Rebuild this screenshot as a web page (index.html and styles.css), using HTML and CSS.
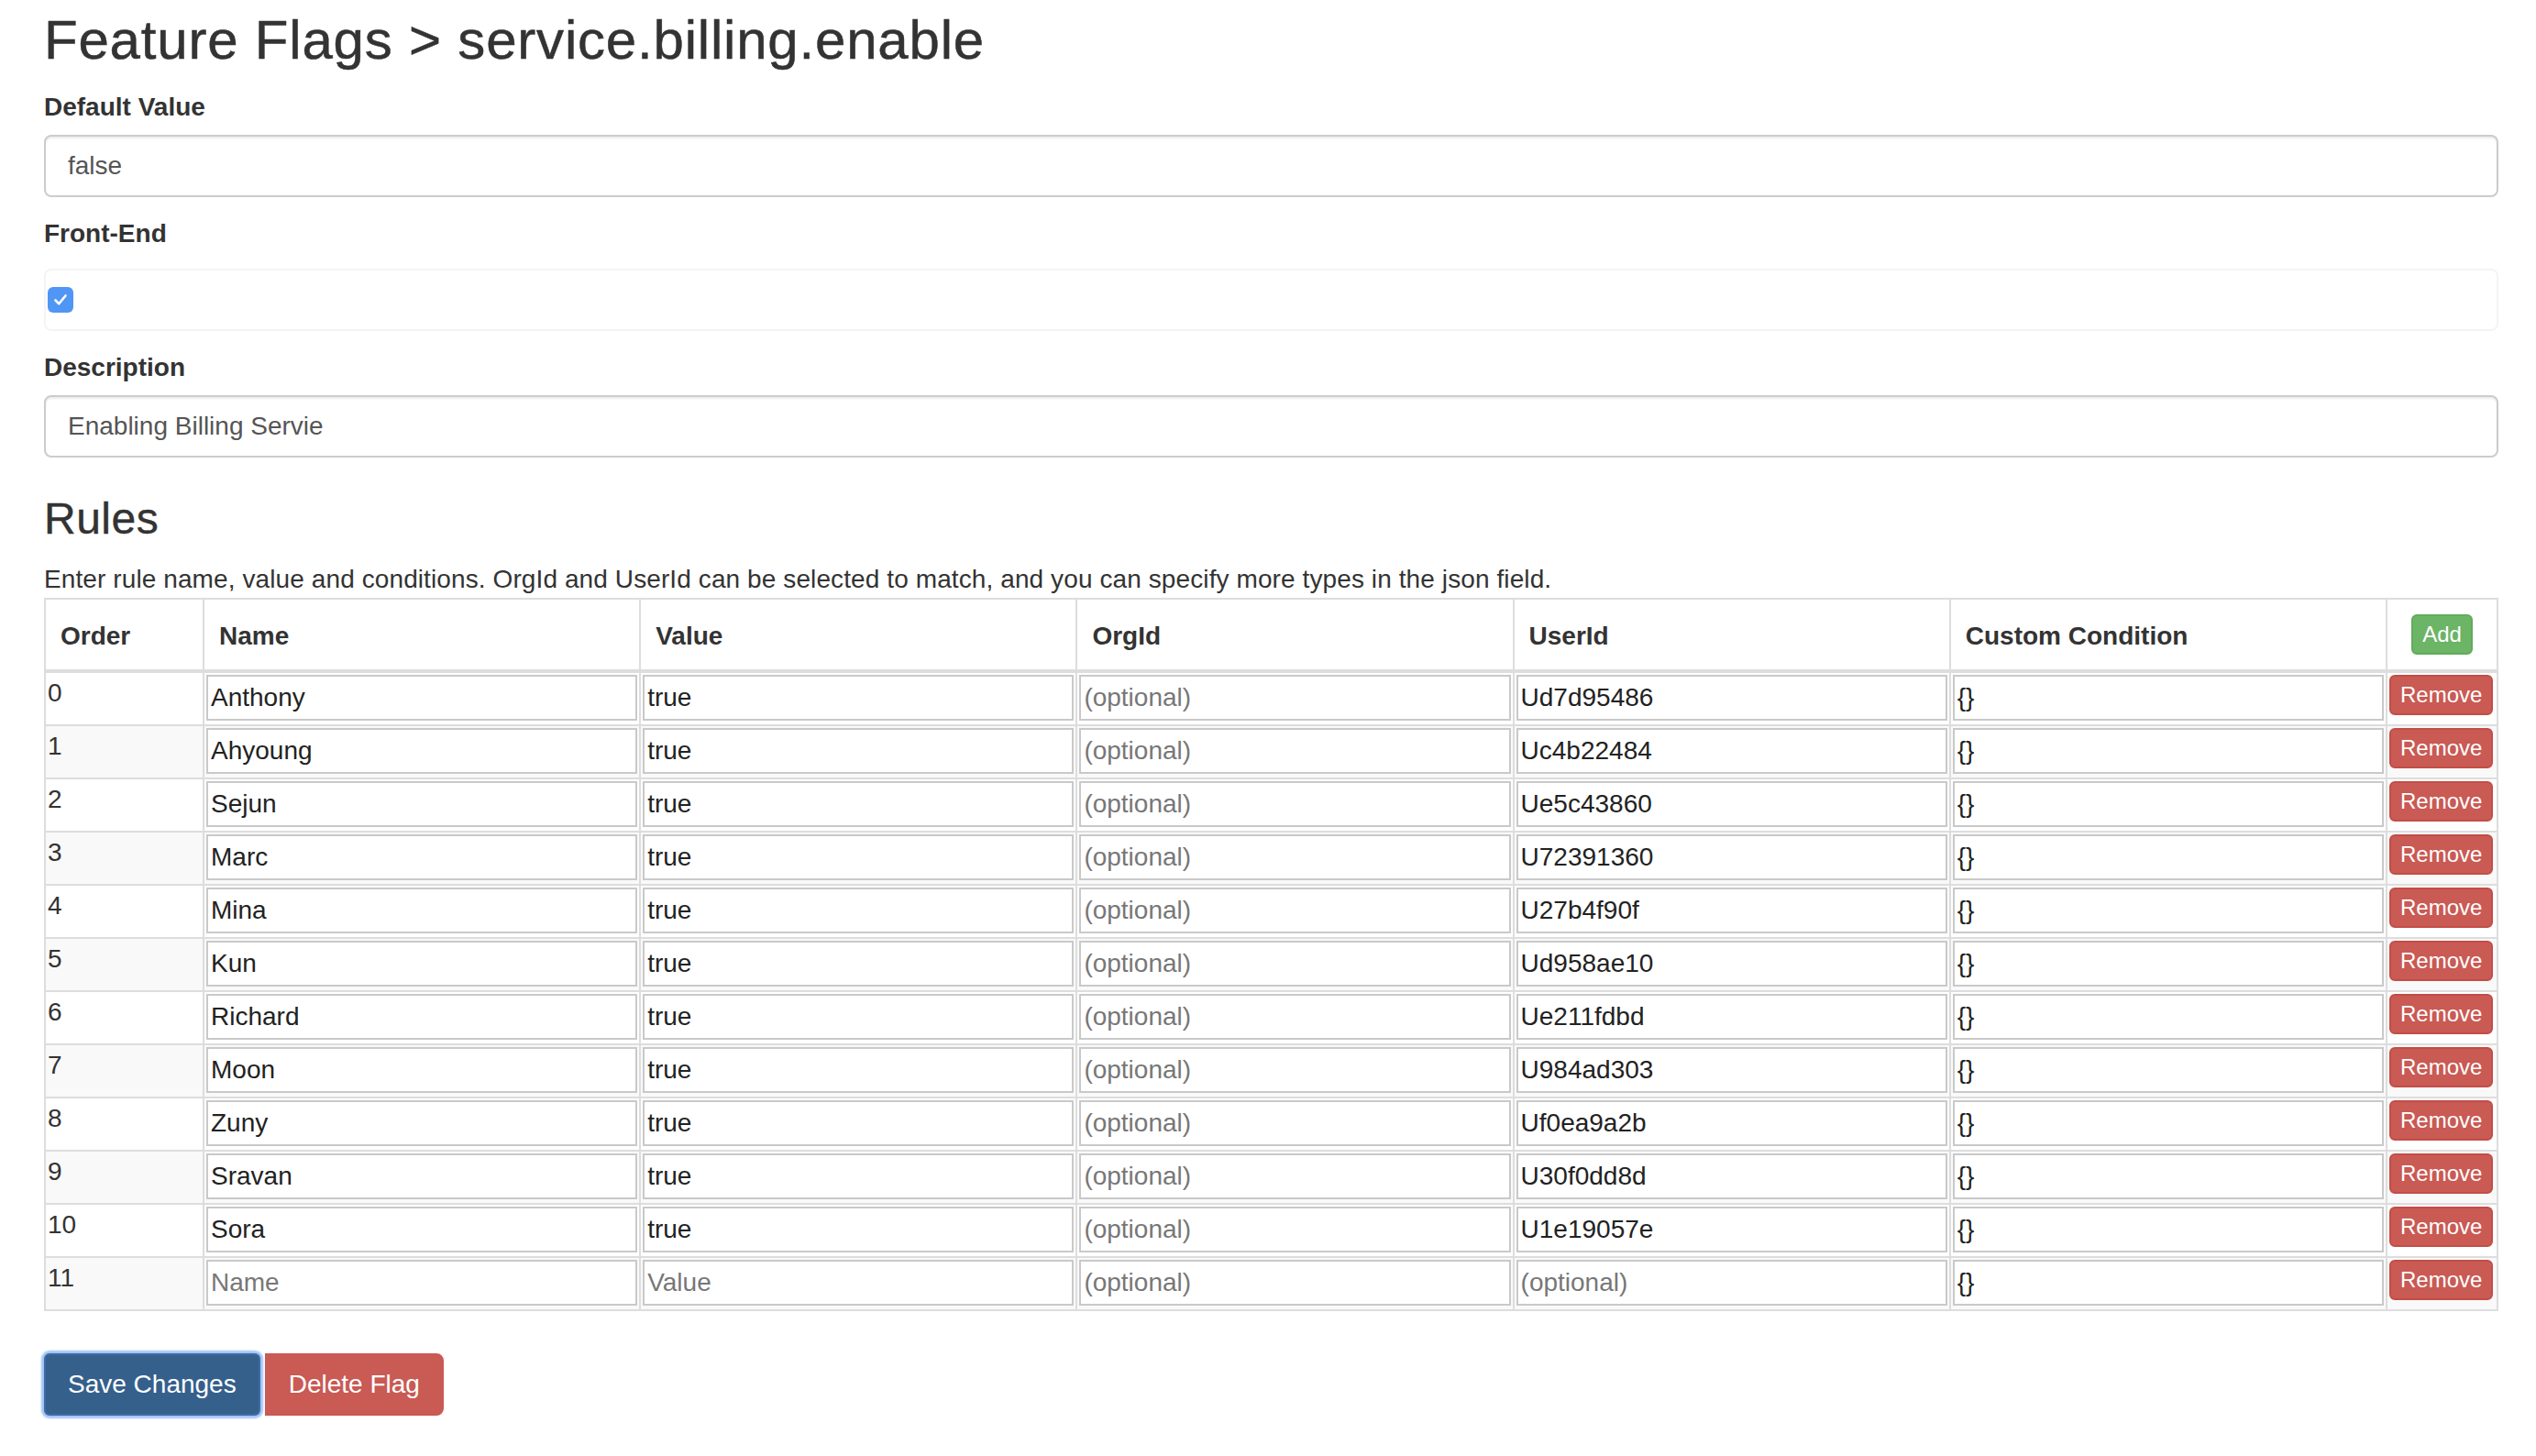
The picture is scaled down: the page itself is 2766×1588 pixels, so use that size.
FILE: index.html
```html
<!DOCTYPE html>
<html>
<head>
<meta charset="utf-8">
<title>Feature Flags</title>
<link rel="stylesheet" href="styles.css">
</head>
<body>
<div class="page">
  <h2 class="title">Feature Flags &gt; service.billing.enable</h2>

  <div class="form-group">
    <label>Default Value</label>
    <input class="form-control" type="text" value="false">
  </div>

  <div class="form-group">
    <label>Front-End</label>
    <div class="check-wrap">
      <span class="checkbox">
        <svg width="20" height="20" viewBox="0 0 20 20"><path d="M4.5 10.5 L8.3 14.3 L15.5 5.5" fill="none" stroke="#fff" stroke-width="2.6" stroke-linecap="round" stroke-linejoin="round"/></svg>
      </span>
    </div>
  </div>

  <div class="form-group">
    <label>Description</label>
    <input class="form-control" type="text" value="Enabling Billing Servie">
  </div>

  <h3 class="rules">Rules</h3>
  <div class="help">Enter rule name, value and conditions. OrgId and UserId can be selected to match, and you can specify more types in the json field.</div>

  <table class="rules-table">
    <colgroup>
      <col class="c-order">
      <col>
      <col>
      <col>
      <col>
      <col>
      <col class="c-action">
    </colgroup>
    <thead>
      <tr>
        <th>Order</th>
        <th>Name</th>
        <th>Value</th>
        <th>OrgId</th>
        <th>UserId</th>
        <th>Custom Condition</th>
        <th class="th-action"><button class="btn-xs btn-success">Add</button></th>
      </tr>
    </thead>
    <tbody>
      <tr><td>0</td><td><input value="Anthony"></td><td><input value="true"></td><td><input placeholder="(optional)"></td><td><input value="Ud7d95486"></td><td><input value="{}"></td><td><button class="btn-xs btn-danger">Remove</button></td></tr>
      <tr><td>1</td><td><input value="Ahyoung"></td><td><input value="true"></td><td><input placeholder="(optional)"></td><td><input value="Uc4b22484"></td><td><input value="{}"></td><td><button class="btn-xs btn-danger">Remove</button></td></tr>
      <tr><td>2</td><td><input value="Sejun"></td><td><input value="true"></td><td><input placeholder="(optional)"></td><td><input value="Ue5c43860"></td><td><input value="{}"></td><td><button class="btn-xs btn-danger">Remove</button></td></tr>
      <tr><td>3</td><td><input value="Marc"></td><td><input value="true"></td><td><input placeholder="(optional)"></td><td><input value="U72391360"></td><td><input value="{}"></td><td><button class="btn-xs btn-danger">Remove</button></td></tr>
      <tr><td>4</td><td><input value="Mina"></td><td><input value="true"></td><td><input placeholder="(optional)"></td><td><input value="U27b4f90f"></td><td><input value="{}"></td><td><button class="btn-xs btn-danger">Remove</button></td></tr>
      <tr><td>5</td><td><input value="Kun"></td><td><input value="true"></td><td><input placeholder="(optional)"></td><td><input value="Ud958ae10"></td><td><input value="{}"></td><td><button class="btn-xs btn-danger">Remove</button></td></tr>
      <tr><td>6</td><td><input value="Richard"></td><td><input value="true"></td><td><input placeholder="(optional)"></td><td><input value="Ue211fdbd"></td><td><input value="{}"></td><td><button class="btn-xs btn-danger">Remove</button></td></tr>
      <tr><td>7</td><td><input value="Moon"></td><td><input value="true"></td><td><input placeholder="(optional)"></td><td><input value="U984ad303"></td><td><input value="{}"></td><td><button class="btn-xs btn-danger">Remove</button></td></tr>
      <tr><td>8</td><td><input value="Zuny"></td><td><input value="true"></td><td><input placeholder="(optional)"></td><td><input value="Uf0ea9a2b"></td><td><input value="{}"></td><td><button class="btn-xs btn-danger">Remove</button></td></tr>
      <tr><td>9</td><td><input value="Sravan"></td><td><input value="true"></td><td><input placeholder="(optional)"></td><td><input value="U30f0dd8d"></td><td><input value="{}"></td><td><button class="btn-xs btn-danger">Remove</button></td></tr>
      <tr><td>10</td><td><input value="Sora"></td><td><input value="true"></td><td><input placeholder="(optional)"></td><td><input value="U1e19057e"></td><td><input value="{}"></td><td><button class="btn-xs btn-danger">Remove</button></td></tr>
      <tr><td>11</td><td><input placeholder="Name"></td><td><input placeholder="Value"></td><td><input placeholder="(optional)"></td><td><input placeholder="(optional)"></td><td><input value="{}"></td><td><button class="btn-xs btn-danger">Remove</button></td></tr>
    </tbody>
  </table>

  <div class="actions">
    <button class="btn btn-primary">Save Changes</button>
    <button class="btn btn-delete">Delete Flag</button>
  </div>
</div>
</body>
</html>
```
FILE: styles.css
```css
html, body {
  margin: 0;
  padding: 0;
  background: #fff;
}

body {
  font-family: "Liberation Sans", Arial, sans-serif;
  font-size: 28px;
  line-height: 40px;
  color: #333;
}

.page {
  padding: 11px 41px 40px 48px;
}

.title {
  font-size: 60px;
  font-weight: 400;
  line-height: 66px;
  margin: 0 0 20px 0;
  color: #333;
  letter-spacing: 0.8px;
  -webkit-text-stroke: 0.5px #333;
}

.form-group {
  margin-bottom: 20px;
}

.form-group label {
  display: block;
  font-weight: 700;
  margin-bottom: 10px;
}

.form-control {
  display: block;
  width: 100%;
  height: 68px;
  box-sizing: border-box;
  padding: 12px 24px;
  font: inherit;
  color: #555;
  background: #fff;
  border: 2px solid #ccc;
  border-radius: 8px;
  box-shadow: inset 0 2px 2px rgba(0, 0, 0, 0.075);
  outline: none;
}

.check-wrap {
  margin-top: 18px;
  height: 68px;
  box-sizing: border-box;
  border: 2px solid #f4f4f4;
  border-radius: 8px;
  display: flex;
  align-items: center;
  padding-left: 2px;
}

.checkbox {
  width: 28px;
  height: 28px;
  border-radius: 6px;
  background: #5096f4;
  display: flex;
  align-items: center;
  justify-content: center;
}

.rules {
  font-size: 48px;
  font-weight: 400;
  line-height: 53px;
  margin: 40px 0 20px 0;
  color: #333;
  letter-spacing: 0.5px;
  -webkit-text-stroke: 0.4px #333;
}

.help {
  margin: 0;
  letter-spacing: 0.1px;
}

.rules-table {
  width: 100%;
  border-collapse: collapse;
  table-layout: fixed;
  margin-bottom: 46px;
}

.c-order {
  width: 173px;
}

.c-action {
  width: 121px;
}

.rules-table th,
.rules-table td {
  border: 2px solid #ddd;
}

.rules-table th {
  padding: 16px;
  text-align: left;
  font-weight: 700;
  vertical-align: bottom;
  border-bottom-width: 4px;
}

.rules-table th.th-action {
  text-align: center;
  padding: 16px 0;
}

.rules-table td {
  padding: 2px;
  vertical-align: top;
  height: 52px;
}

.rules-table tbody tr:nth-child(even) {
  background: #f9f9f9;
}

.rules-table td input {
  display: block;
  width: 100%;
  height: 50px;
  box-sizing: border-box;
  margin: 0;
  padding: 0 3px;
  font: inherit;
  color: #222;
  background: #fff;
  border: 2px solid #c9c9c9;
  border-radius: 0;
  outline: none;
}

.rules-table td input::placeholder {
  color: #777;
}

.btn-xs {
  display: inline-block;
  font-family: inherit;
  font-size: 24px;
  line-height: 36px;
  padding: 2px 10px;
  border: 2px solid transparent;
  border-radius: 6px;
  color: #fff;
  cursor: pointer;
  vertical-align: bottom;
}

.btn-success {
  background: #6cb466;
  border-color: #60ac5a;
}

.btn-danger {
  background: #c95a54;
  border-color: #c34d47;
}

.rules-table td .btn-danger {
  display: block;
}

.actions {
  display: flex;
  gap: 5px;
}

.btn {
  display: inline-block;
  font-family: inherit;
  font-size: 28px;
  line-height: 40px;
  padding: 12px 24px;
  border: 2px solid transparent;
  color: #fff;
  cursor: pointer;
}

.btn-primary {
  background: #35608c;
  border-color: #3d6ca3;
  border-radius: 6px;
  box-shadow: 0 0 2px 3px rgba(110, 165, 240, 0.65);
}

.btn-delete {
  background: #c95a54;
  border-color: #c95a54;
  border-radius: 0 8px 8px 0;
}
```
